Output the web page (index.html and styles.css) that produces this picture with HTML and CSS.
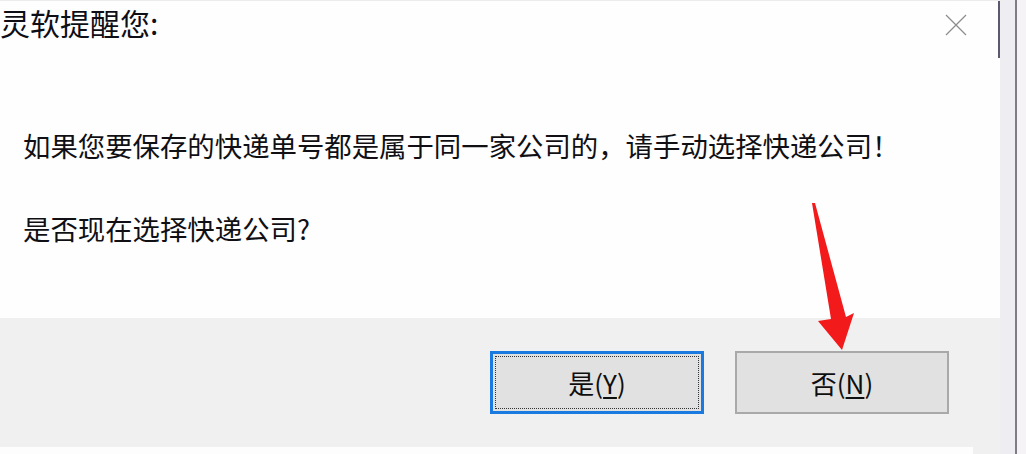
FILE: index.html
```html
<!DOCTYPE html>
<html lang="zh-CN">
<head>
<meta charset="utf-8">
<title>灵软提醒您</title>
<link rel="stylesheet" href="styles.css">
</head>
<body>
<div class="screen">
  <div class="dialog">
    <div class="panel">
      <div class="panel-content">
        <div class="titlebar">
          <div class="title">灵软提醒您:</div>
          <svg class="close" width="22" height="22" viewBox="0 0 22 22" aria-label="关闭">
            <path d="M1 1 L21 21 M21 1 L1 21" stroke="#8c8c8c" stroke-width="1.2" fill="none"/>
          </svg>
        </div>
        <div class="message">
          <p class="line">如果您要保存的快递单号都是属于同一家公司的，请手动选择快递公司！</p>
          <p class="line">是否现在选择快递公司?</p>
        </div>
      </div>
      <div class="scroll-col"><div class="scroll-thumb"></div></div>
    </div>
    <div class="footer">
      <button class="btn btn-default"><span class="focus">是(<u>Y</u>)</span></button>
      <button class="btn">否(<u>N</u>)</button>
    </div>
    <div class="bottom-strip"><div class="bottom-white"></div></div>
  </div>
  <div class="edge">
    <div class="edge-gray"></div>
    <div class="edge-line"></div>
    <div class="edge-light"></div>
  </div>
  <svg class="arrow" width="1026" height="454" viewBox="0 0 1026 454">
    <polygon points="812,203 815,203 846,317 854,313 842,350 818,321 831,319" fill="#f21a1a"/>
  </svg>
</div>
</body>
</html>
```

FILE: styles.css
```css
html, body {
  margin: 0;
  padding: 0;
}
body {
  width: 1026px;
  height: 454px;
  overflow: hidden;
  background: #ffffff;
  font-family: "Noto Sans CJK SC", "Noto Sans", sans-serif;
  color: #101014;
}
.screen {
  position: relative;
  display: flex;
  width: 1026px;
  height: 454px;
}
.dialog {
  width: 1000px;
  display: flex;
  flex-direction: column;
}
.panel {
  height: 318px;
  display: flex;
  background: #fefefe;
  border-top: 1px solid #ececec;
  box-sizing: border-box;
}
.panel-content {
  flex: 1;
}
.scroll-col {
  width: 2px;
}
.scroll-thumb {
  height: 57px;
  background: #5d586c;
}
.titlebar {
  display: flex;
  justify-content: space-between;
  align-items: flex-start;
  padding-top: 6px;
  padding-right: 31px;
}
.title {
  font-size: 30px;
  line-height: 30px;
  color: #0e0e16;
}
.close {
  display: block;
  margin-top: 7px;
}
.message {
  padding-top: 95px;
  padding-left: 23px;
}
.line {
  margin: 0 0 55.6px 0;
  font-size: 27.4px;
  line-height: 27.4px;
  white-space: nowrap;
  color: #101014;
}
.footer {
  height: 129px;
  box-sizing: border-box;
  background: #f0f0f0;
  display: flex;
  justify-content: flex-end;
  align-items: flex-start;
  gap: 31px;
  padding-top: 33px;
  padding-right: 51px;
}
.btn {
  width: 214px;
  height: 63px;
  box-sizing: border-box;
  background: #e1e1e1;
  border: 2px solid #a9a9a9;
  font-family: "Noto Sans CJK SC", "Noto Sans", sans-serif;
  font-size: 26px;
  color: #0e0e0e;
  display: flex;
  align-items: center;
  justify-content: center;
  padding: 0;
}
.btn u {
  text-underline-offset: 3px;
}
.btn-default {
  border: 3px solid #1b7ae0;
  padding: 2px;
}
.focus {
  flex: 1;
  align-self: stretch;
  display: flex;
  align-items: center;
  justify-content: center;
  border: 1px dotted #333;
}
.bottom-strip {
  flex: 1;
  background: #f0f0f0;
}
.bottom-white {
  width: 973px;
  height: 100%;
  background: #fdfdfd;
}
.edge {
  width: 26px;
  display: flex;
}
.edge-gray {
  width: 15px;
  background: #eeedf1;
}
.edge-line {
  width: 2px;
  background: #7f7b89;
}
.edge-light {
  flex: 1;
  background: #f6f3f6;
}
.arrow {
  position: absolute;
  left: 0;
  top: 0;
  pointer-events: none;
}
```
